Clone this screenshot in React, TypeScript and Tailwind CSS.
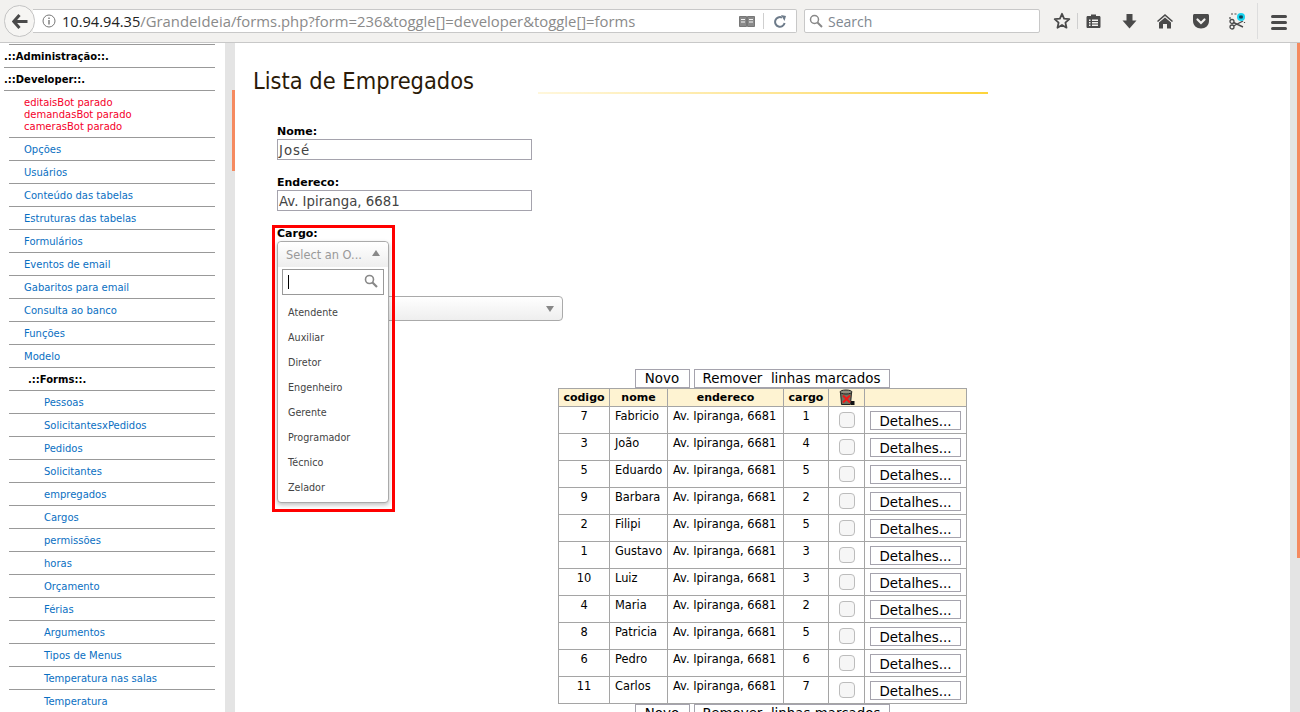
import React from "react";

const group1 = ["Opções","Usuários","Conteúdo das tabelas","Estruturas das tabelas","Formulários","Eventos de email","Gabaritos para email","Consulta ao banco","Funções","Modelo"];
const group2 = ["Pessoas","SolicitantesxPedidos","Pedidos","Solicitantes","empregados","Cargos","permissões","horas","Orçamento","Férias","Argumentos","Tipos de Menus","Temperatura nas salas","Temperatura"];
const options = ["Atendente","Auxiliar","Diretor","Engenheiro","Gerente","Programador","Técnico","Zelador"];
const rows: [string,string,string][] = [["7","Fabricio","1"],["3","João","4"],["5","Eduardo","5"],["9","Barbara","2"],["2","Filipi","5"],["1","Gustavo","3"],["10","Luiz","3"],["4","Maria","2"],["8","Patricia","5"],["6","Pedro","6"],["11","Carlos","7"]];

function Toolbar() {
  return (
    <div className="h-[43px] bg-[#f2f1ef] border-b border-[#c8c8c8] flex items-center relative shrink-0 font-['Open_Sans',sans-serif]">
      <div className="ml-[4px] w-[31px] h-[32px] rounded-full border border-[#c4c4c4] bg-[#f6f5f3] flex items-center justify-center z-10">
        <svg width="16" height="15" viewBox="0 0 16 15"><path d="M7.5 1 L1.8 7.5 L7.5 14 M2.5 7.5 H15.5" fill="none" stroke="#4a4a4a" strokeWidth="3" /></svg>
      </div>
      <div className="ml-[-2px] w-[764px] h-[24px] bg-white border border-[#c8c8c8] border-l-0 rounded-r-[2px] flex items-center">
        <svg className="ml-[9px] shrink-0" width="14" height="14" viewBox="0 0 14 14"><circle cx="7" cy="7" r="6" fill="none" stroke="#777" strokeWidth="1"/><path d="M7 6v4.5M7 3.4v1.6" stroke="#777" strokeWidth="1.4"/></svg>
        <span className="ml-[6px] text-[14.85px] whitespace-nowrap text-[#8a8a8a]"><span className="text-[14.6px] text-[#222]">10.94.94.35</span>/GrandeIdeia/forms.php?form=236&amp;toggle[]=developer&amp;toggle[]=forms</span>
        <div className="ml-auto mr-[10px] flex items-center">
          <svg width="16" height="13" viewBox="0 0 16 13"><path d="M0.5 1.5H7.5V11.5H0.5ZM8.5 1.5H15.5V11.5H8.5Z" fill="#8a8a8a" stroke="#777" strokeWidth="1"/><path d="M2 4.5H6M2 7H6M10 4.5H14M10 7H14" stroke="#f4f4f4" strokeWidth="1"/></svg>
          <div className="ml-[8px] w-px h-[16px] bg-[#cfcfcf]"></div>
          <svg className="ml-[10px]" width="12" height="13" viewBox="0 0 12 13"><path d="M10.6 8A4.8 4.8 0 1 1 8 2.6" fill="none" stroke="#6d7b8a" strokeWidth="2"/><path d="M7 0L12 1L10.5 6Z" fill="#6d7b8a"/></svg>
        </div>
      </div>
      <div className="ml-[7px] w-[236px] h-[24px] bg-white border border-[#c8c8c8] rounded-[2px] flex items-center">
        <svg className="ml-[4px]" width="14" height="14" viewBox="0 0 14 14"><circle cx="5.5" cy="5.5" r="4" fill="none" stroke="#888" strokeWidth="1.5"/><path d="M8.5 8.5L13 13" stroke="#888" strokeWidth="2"/></svg>
        <span className="ml-[5px] text-[14px] text-[#808890]">Search</span>
      </div>
      <svg className="absolute left-[1053px] top-[12px]" width="18" height="18" viewBox="0 0 18 18"><path d="M9 1.8L11.1 6.6L16.3 7.1L12.4 10.6L13.5 15.7L9 13L4.5 15.7L5.6 10.6L1.7 7.1L6.9 6.6Z" fill="none" stroke="#4a4a4a" strokeWidth="1.8" strokeLinejoin="round"/></svg>
      <div className="absolute left-[1077px] top-[13px] w-px h-[16px] bg-[#cfcfcf]"></div>
      <svg className="absolute left-[1086px] top-[13px]" width="15" height="16" viewBox="0 0 15 16"><path d="M5 1.5H10V3H13.2C14 3 14.5 3.6 14.5 4.3V13.7C14.5 14.4 14 15 13.2 15H1.8C1 15 .5 14.4 .5 13.7V4.3C.5 3.6 1 3 1.8 3H5Z" fill="#4a4a4a"/><path d="M3 6.5H4.5V8H3ZM6 6.5H12V8H6ZM3 9H4.5V10.5H3ZM6 9H12V10.5H6ZM3 11.5H4.5V13H3ZM6 11.5H12V13H6Z" fill="#f2f1ef"/></svg>
      <svg className="absolute left-[1122px] top-[14px]" width="15" height="15" viewBox="0 0 15 15"><path d="M4.5 0H10.5V6.5H14.5L7.5 14.5L.5 6.5H4.5Z" fill="#4a4a4a"/></svg>
      <svg className="absolute left-[1157px] top-[14px]" width="16" height="15" viewBox="0 0 16 15"><path d="M8 0L16 7L15 8L8 2L1 8L0 7Z" fill="#4a4a4a"/><path d="M8 3.5L14 8.5V14.5H10V10H6V14.5H2V8.5Z" fill="#4a4a4a"/></svg>
      <svg className="absolute left-[1193px] top-[14px]" width="16" height="15" viewBox="0 0 16 15"><path d="M1.5 0H14.5C15.3 0 16 .7 16 1.5V7C16 11.5 12.5 14.5 8 14.5C3.5 14.5 0 11.5 0 7V1.5C0 .7 .7 0 1.5 0Z" fill="#4a4a4a"/><path d="M4.5 5.5L8 9L11.5 5.5" fill="none" stroke="#f2f1ef" strokeWidth="2.2" strokeLinecap="round"/></svg>
      <svg className="absolute left-[1229px] top-[13px]" width="18" height="17" viewBox="0 0 18 17"><path d="M2 1h2M5.5 1h2M1 4v2M15.5 9v1" stroke="#4a4a4a" strokeWidth="1.2"/><circle cx="3" cy="14" r="2" fill="none" stroke="#4a4a4a" strokeWidth="1.3"/><circle cx="3" cy="8.5" r="2" fill="none" stroke="#4a4a4a" strokeWidth="1.3"/><path d="M4.5 13L14 8M4.5 9.5L14 14" stroke="#4a4a4a" strokeWidth="1.4"/><circle cx="12" cy="4" r="4" fill="#19d4f0"/><path d="M12 2v4M10 3l4 2M14 3l-4 2" stroke="#134" strokeWidth="1"/></svg>
      <div className="absolute left-[1257px] top-[3px] w-px h-[36px] bg-[#dddddd]"></div>
      <div className="absolute left-[1271px] top-[15px] w-[16px] flex flex-col gap-[3px]">
        <div className="h-[3px] rounded-full bg-[#4a4a4a]"></div>
        <div className="h-[3px] rounded-full bg-[#4a4a4a]"></div>
        <div className="h-[3px] rounded-full bg-[#4a4a4a]"></div>
      </div>
    </div>
  );
}

function SideLink({ text, indent }: { text: string; indent: string }) {
  return <div className={`h-[23px] border-b border-[#999] flex items-center text-[10px] text-[#0a6fc2] ${indent}`}>{text}</div>;
}

function Sidebar() {
  return (
    <aside className="w-[225px] shrink-0 h-full overflow-hidden pl-[9px] pr-[10px] font-['DejaVu_Sans',sans-serif]">
      <div className="border-t border-[#999] mt-[1px]"></div>
      <div className="h-[23px] border-b border-[#999] flex items-center -ml-[5px] font-bold text-[10px] text-black">.::Administração::.</div>
      <div className="h-[23px] border-b border-[#999] flex items-center -ml-[5px] font-bold text-[10px] text-black">.::Developer::.</div>
      <div className="h-[47px] border-b border-[#999] pl-[15px] pt-[6px] text-[10px] leading-[12px] text-[#f5002a]">
        <div>editaisBot parado</div><div>demandasBot parado</div><div>camerasBot parado</div>
      </div>
      {group1.map((t) => <SideLink key={t} text={t} indent="pl-[15px]" />)}
      <div className="h-[23px] border-b border-[#999] flex items-center pl-[19px] font-bold text-[10px] text-black">.::Forms::.</div>
      {group2.map((t) => <SideLink key={t} text={t} indent="pl-[35px]" />)}
    </aside>
  );
}

function Field({ label, value, wide }: { label: string; value: string; wide?: boolean }) {
  return (
    <div className="mb-[14px]">
      <div className="h-[16px] text-[11px] leading-[14px] font-bold text-black pt-[2px]">{label}</div>
      <div className={`w-[255px] h-[21px] border border-[#a5a3ad] text-[13.3px] leading-[21px] pl-[1px] text-[#444] ${wide ? "tracking-[1px]" : ""}`}>{value}</div>
    </div>
  );
}

function TrashIcon() {
  return (
    <svg width="17" height="17" viewBox="0 0 17 17" className="mx-auto">
      <path d="M2.5 3.5H13.5L12.5 15.5H3.5Z" fill="#6f7460" stroke="#222" strokeWidth="1"/>
      <ellipse cx="8" cy="3" rx="6" ry="2" fill="#8f9080" stroke="#222" strokeWidth="1"/>
      <path d="M5 6.5L12 13.5M12 6.5L5 13.5" stroke="#f01818" strokeWidth="2"/>
      <rect x="13" y="12" width="3.5" height="4" fill="#111"/>
    </svg>
  );
}

function Btn({ children, w }: { children: React.ReactNode; w: string }) {
  return <div className={`h-[19px] border border-[#a5a3ad] pt-[2px] flex items-center justify-center text-[13.4px] text-black whitespace-nowrap ${w}`}>{children}</div>;
}

function EmpTable() {
  const th = "border border-[#a5a5a5] bg-[#fef3d2] text-[11px] font-bold text-black h-[18px] p-0 leading-[14px]";
  const td = "border border-[#a5a5a5] align-top p-0 pt-[2px] text-[11.4px] leading-[14px] text-black";
  return (
    <div className="w-[408px] ml-[323px] mt-[47px]">
      <div className="flex justify-center gap-[4px] h-[20px] pt-[1px]">
        <Btn w="w-[55px]">Novo</Btn>
        <Btn w="w-[196px]"><span className="whitespace-pre">Remover  linhas marcados</span></Btn>
      </div>
      <table className="border-collapse table-fixed w-[408px] border-[#a5a5a5]">
        <colgroup>
          <col className="w-[51px]" /><col className="w-[58px]" /><col className="w-[116px]" /><col className="w-[45px]" /><col className="w-[36px]" /><col className="w-[102px]" />
        </colgroup>
        <thead>
          <tr>
            <th className={th}>codigo</th><th className={th}>nome</th><th className={th}>endereco</th><th className={th}>cargo</th><th className={th}><TrashIcon /></th><th className={th}></th>
          </tr>
        </thead>
        <tbody>
          {rows.map((r) => (
            <tr key={r[0]} className="h-[27px]">
              <td className={`${td} text-center`}>{r[0]}</td>
              <td className={`${td} pl-[5px] whitespace-nowrap`}>{r[1]}</td>
              <td className={`${td} pl-[5px] whitespace-nowrap`}>Av. Ipiranga, 6681</td>
              <td className={`${td} text-center`}>{r[2]}</td>
              <td className={`${td} pt-[5px]`}><div className="mx-auto w-[16px] h-[16px] rounded-[4px] border border-[#bcbcbc] bg-[#f6f6f6]"></div></td>
              <td className={`${td} pt-[4px] pl-[5px]`}><Btn w="w-[91px]">Detalhes...</Btn></td>
            </tr>
          ))}
        </tbody>
      </table>
      <div className="flex justify-center gap-[4px] h-[19px]">
        <Btn w="w-[55px]">Novo</Btn>
        <Btn w="w-[196px]"><span className="whitespace-pre">Remover  linhas marcados</span></Btn>
      </div>
    </div>
  );
}

function CargoDropdown() {
  return (
    <div className="absolute left-[37px] top-[182px] w-[123px] h-[287px] border-[3px] border-[#ff0000] z-10">
      <div className="absolute -top-[1px] left-[2px] text-[11px] leading-[14px] font-bold text-black">Cargo:</div>
      <div className="absolute left-[2px] top-[13px] w-[112px] h-[262px] rounded-[4px] border border-[#aaa] bg-white shadow-[0_2px_4px_rgba(0,0,0,0.25)]">
        <div className="h-[25px] rounded-t-[4px] bg-gradient-to-b from-white to-[#eeeeee] flex items-center pt-[2px] pl-[8px] text-[11.4px] text-[#999]">
          Select an O...
          <svg className="absolute left-[94px] top-[8px]" width="8" height="6" viewBox="0 0 8 6"><path d="M4 0L8 6H0Z" fill="#888"/></svg>
        </div>
        <div className="mx-[4px] mt-[2px] h-[26px] border border-[#999] flex items-center relative">
          <div className="ml-[5px] w-px h-[14px] bg-black"></div>
          <svg className="absolute right-[5px] top-[4px]" width="14" height="14" viewBox="0 0 14 14"><circle cx="5.5" cy="5.5" r="4" fill="none" stroke="#888" strokeWidth="1.6"/><path d="M8.5 8.5L13 13" stroke="#888" strokeWidth="2.2"/></svg>
        </div>
        <div className="mt-[6px]">
          {options.map((o) => <div key={o} className="h-[25px] pl-[10px] flex items-center text-[9.6px] text-[#444]">{o}</div>)}
        </div>
      </div>
    </div>
  );
}

function Main() {
  return (
    <main className="flex-1 relative h-full overflow-hidden font-['DejaVu_Sans',sans-serif]">
      <div className="pl-[18px] pt-[24px] flex items-start h-[50px]">
        <h1 className="text-[23.4px] leading-[28px] text-[#2a1a08] whitespace-nowrap font-['DejaVu_Sans_Condensed','DejaVu_Sans',sans-serif]">Lista de Empregados</h1>
      </div>
      <div className="absolute left-[303px] top-[49px] w-[450px] h-[2px] bg-gradient-to-r from-[#fff7dc] to-[#fdd43a]"></div>
      <div className="pl-[42px] pt-[30px]">
        <Field label="Nome:" value="José" wide />
        <Field label="Endereco:" value="Av. Ipiranga, 6681" />
        <div className="h-[71px]"></div>
        <div className="w-[286px] h-[25px] rounded-[4px] border border-[#aaa] bg-gradient-to-b from-white to-[#eeeeee] relative">
          <svg className="absolute left-[268px] top-[9px]" width="8" height="6" viewBox="0 0 8 6"><path d="M4 6L8 0H0Z" fill="#888"/></svg>
        </div>
      </div>
      <EmpTable />
      <CargoDropdown />
    </main>
  );
}

export default function App() {
  return (
    <div className="w-[1300px] h-[712px] overflow-hidden bg-white flex flex-col">
      <Toolbar />
      <div className="flex flex-1 min-h-0 relative">
        <Sidebar />
        <div className="w-[10px] shrink-0 bg-[#e4e4e4] relative">
          <div className="absolute right-0 top-[47px] w-[3px] h-[81px] bg-[#f58a60]"></div>
        </div>
        <Main />
        <div className="w-[10px] shrink-0 bg-[#e4e4e4] relative">
          <div className="absolute right-0 top-0 w-[3px] h-[515px] bg-[#f58a60]"></div>
        </div>
      </div>
    </div>
  );
}
